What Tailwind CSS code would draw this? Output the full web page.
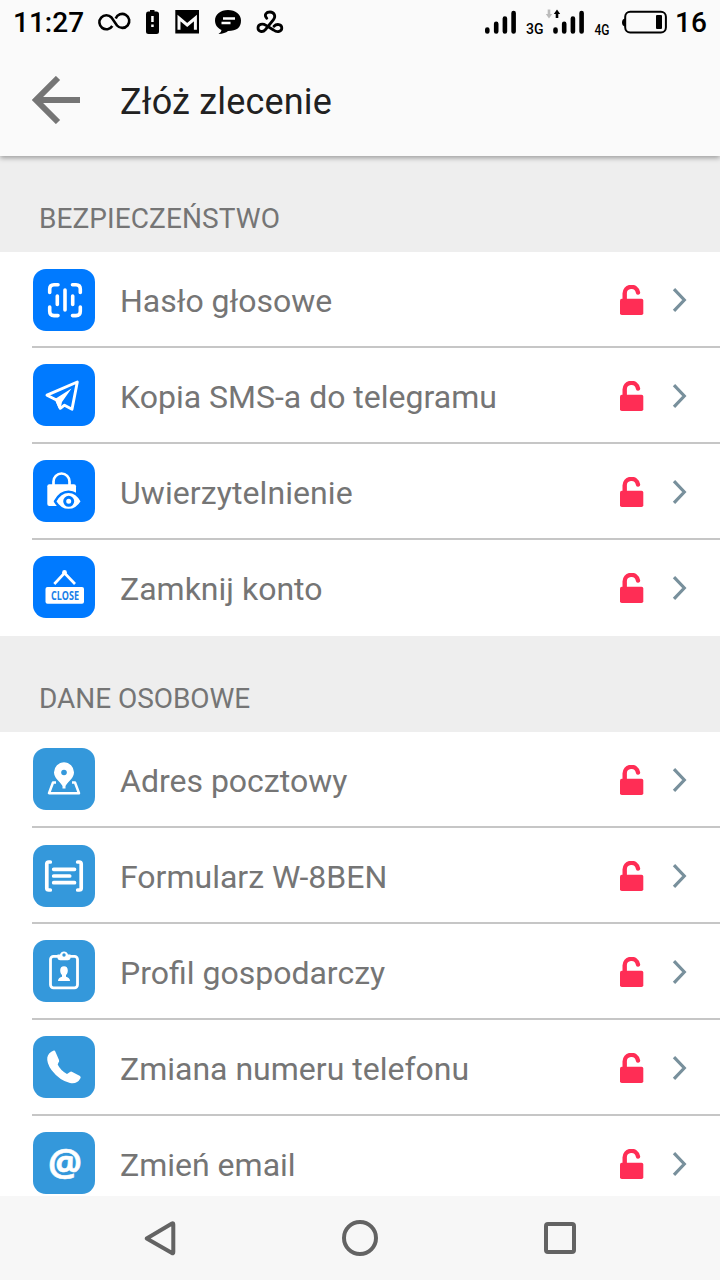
<!DOCTYPE html>
<html lang="pl">
<head>
<meta charset="utf-8">
<title>Złóż zlecenie</title>
<script src="https://cdn.jsdelivr.net/npm/@tailwindcss/browser@4"></script>
</head>
<body class="h-[1280px] w-[720px] overflow-hidden bg-white font-['Roboto',sans-serif]">
<svg class="hidden">
  <symbol id="lock" viewBox="0 0 24 30">
    <rect y="13.7" width="23.3" height="16.3" rx="1.8" fill="#ff2d55"/>
    <path d="M4.700 15V9a6.700 6.700 0 0 1 13.300-1.500" fill="none" stroke="#ff2d55" stroke-width="4.400" stroke-linecap="round"/>
  </symbol>
  <symbol id="chevron" viewBox="0 0 16 26">
    <path d="M2 2.200 12.300 13 2 23.800" fill="none" stroke="#78909c" stroke-width="3.200"/>
  </symbol>
</svg>
<div class="flex h-full flex-col">
  <header class="relative z-10 h-[156px] shrink-0 bg-[#fafafa] shadow-[0_2px_5px_rgba(0,0,0,0.35)]">
    <div class="flex h-12 items-center text-[28px] font-medium text-black">
      <span class="h-12 w-[96px] shrink-0 pl-[13px] leading-[46px]">11:27</span>
      <svg class="h-12 w-[192px] shrink-0" viewBox="96 0 192 48">
        <path d="M112.300 26A7 7 0 1 1 111.500 17.500L117 25.500A7 7 0 1 0 115.700 18.500" fill="none" stroke="#000" stroke-width="2.600"/>
        <path d="M148 11.500h2v-1.500h4.500v1.500h2q2.500 0 2.500 2.500v17.500q0 2.500-2.500 2.500h-8q-2.500 0-2.500-2.500V14q0-2.500 2-2.500z"/>
        <path d="M151.200 16h2.500v6h-2.500zM151.200 24.500h2.500v2.500h-2.500z" fill="#fff"/>
        <rect x="175.300" y="10" width="23.700" height="23.500"/>
        <path d="M179 29.700V18L187.200 25 195.400 18V29.700" fill="none" stroke="#fafafa" stroke-width="3"/>
        <path d="M228 10C220.500 10 215 14.600 215 20.500 215 25 217.500 28 221.500 30Q221.500 32.500 218.500 34 225 33.500 228 31 241 31 241 20.500C241 14.600 235.500 10 228 10z"/>
        <path d="M223 18.500h12M221.500 23h9" stroke="#fff" stroke-width="2.300"/>
        <path d="M266.800 18.300C263.500 14.500 266.500 12 270 12 274.500 12 276 16.500 273.500 19.700L265.500 29.500C262.500 33 258 31.500 258 28 258 24 262.500 23 266 25.300L273.500 30C277.500 33 281.800 31.500 281.800 28 281.800 24 276.500 23.500 274 26.300" fill="none" stroke="#000" stroke-width="2.800" stroke-linecap="round"/>
      </svg>
      <svg class="ml-auto h-12 w-[200px] shrink-0" viewBox="472 0 200 48">
        <g fill="none" stroke="#000" stroke-width="4.600" stroke-linecap="round">
          <path d="M487.300 29.500v2M496.200 23.700v7.800M504.900 18.500v13M513.600 13v18.500"/>
          <path d="M555.500 29.500v2M564.200 23.700v7.800M572.900 18.500v13M581.600 13v18.500"/>
        </g>
        <text x="526" y="33.700" class="font-['Roboto',sans-serif] text-[15px] font-medium" textLength="17.500" lengthAdjust="spacingAndGlyphs">3G</text>
        <text x="594.500" y="35" class="font-['Roboto',sans-serif] text-[15px] font-medium" textLength="15" lengthAdjust="spacingAndGlyphs">4G</text>
        <path d="M547.700 9.500h2.600v4.500h1.900l-3.200 4.500-3.200-4.500h1.900z" fill="#bbb"/>
        <path d="M555.700 18h2.600v-4h1.900l-3.200-4.500-3.200 4.500h1.900z"/>
        <rect x="625.200" y="11.800" width="40.700" height="20.700" rx="5" fill="none" stroke="#000" stroke-width="2"/>
        <path d="M625 18.500q-3 .5-3 4t3 4z"/>
        <rect x="656" y="15" width="6" height="14" rx="1"/>
      </svg>
      <span class="h-12 w-12 shrink-0 pl-[3px] leading-[46px]">16</span>
    </div>
    <div class="flex h-[108px] items-center pl-8">
      <svg class="mb-1 h-12 w-12" viewBox="0 0 48 48" fill="none" stroke="#757575" stroke-width="6"><path d="M48 24H5M26 2 4 24 26 46"/></svg>
      <h1 class="ml-10 text-[36px] leading-[42px] tracking-[0.18px] text-[#212121]">Złóż zlecenie</h1>
    </div>
  </header>

  <main class="min-h-0 flex-1 overflow-hidden text-[#757575]">
    <h2 class="flex h-24 items-end bg-[#eeeeee] pb-[17px] pl-[39px] text-[28px] leading-[33px] tracking-[0.08px]">BEZPIECZEŃSTWO</h2>
    <ul class="text-[32px] leading-[38px]">
      <li class="ml-8 flex h-24 items-center border-b-2 border-[#c6c6c6] pt-0.5">
        <svg class="ml-px size-[62px] rounded-[13px] bg-[#007aff]" viewBox="0 0 62 62" fill="none" stroke="#fff" stroke-width="3.600" stroke-linecap="round">
          <path d="M25 15.700H21q-4.300 0-4.300 4.300v3.500M39.500 15.700h3.500q4.300 0 4.300 4.300v3.500M16.700 38v4.300q0 4.300 4.300 4.300h4M47.300 38v4.300q0 4.300-4.300 4.300h-3.500M24.300 27v8.500M32 21v20M39.700 27v8.500"/>
        </svg>
        <span class="ml-[25px] flex-1 pt-0.5">Hasło głosowe</span>
        <svg class="h-[30px] w-6"><use href="#lock"/></svg><svg class="mr-8 ml-[28px] h-[26px] w-4"><use href="#chevron"/></svg>
      </li>
      <li class="ml-8 flex h-24 items-center border-b-2 border-[#c6c6c6] pt-0.5">
        <svg class="relative -top-px ml-px size-[62px] rounded-[13px] bg-[#007aff]" viewBox="0 0 62 62">
          <path d="M14 31.200 44.300 18 39 45.200 31.500 41.200 27.300 44.300 23.500 36z" fill="none" stroke="#fff" stroke-width="2.900" stroke-linejoin="round"/>
          <path d="M22 35 38.500 24.500 29 38 27.500 45 25.500 44z" fill="#fff"/>
        </svg>
        <span class="ml-[25px] flex-1 pt-0.5">Kopia SMS-a do telegramu</span>
        <svg class="h-[30px] w-6"><use href="#lock"/></svg><svg class="mr-8 ml-[28px] h-[26px] w-4"><use href="#chevron"/></svg>
      </li>
      <li class="ml-8 flex h-24 items-center border-b-2 border-[#c6c6c6] pt-0.5">
        <svg class="relative -top-px ml-px size-[62px] rounded-[13px] bg-[#007aff]" viewBox="0 0 62 62">
          <path d="M20.500 26v-4.500a8 8 0 0 1 16 0V26" fill="none" stroke="#fff" stroke-width="2.700"/>
          <rect x="14.300" y="24.300" width="28.700" height="21.700" rx="2" fill="#fff"/>
          <path d="M22 41.300C29 28.500 42 28.500 49 41.300 42 53 29 53 22 41.300z" fill="#fff" stroke="#007aff" stroke-width="2.500" stroke-linejoin="round"/>
          <circle cx="35.700" cy="41.300" r="4" fill="#fff" stroke="#007aff" stroke-width="3"/>
        </svg>
        <span class="ml-[25px] flex-1 pt-0.5 tracking-[0.08px]">Uwierzytelnienie</span>
        <svg class="h-[30px] w-6"><use href="#lock"/></svg><svg class="mr-8 ml-[28px] h-[26px] w-4"><use href="#chevron"/></svg>
      </li>
      <li class="ml-8 flex h-24 items-center">
        <svg class="relative -top-px ml-px size-[62px] rounded-[13px] bg-[#007aff]" viewBox="0 0 62 62">
          <path d="M21.300 28 31.500 17 42 28" fill="none" stroke="#fff" stroke-width="2.700"/>
          <circle cx="31.500" cy="16.500" r="2.400" fill="#fff"/>
          <rect x="12.500" y="31" width="38.500" height="16.700" rx="2" fill="#fff"/>
          <text x="18" y="43.500" class="fill-[#1a80e8] font-['Open_Sans',sans-serif] text-[12px] font-bold" textLength="28" lengthAdjust="spacingAndGlyphs">CLOSE</text>
        </svg>
        <span class="ml-[25px] flex-1 pt-0.5">Zamknij konto</span>
        <svg class="h-[30px] w-6"><use href="#lock"/></svg><svg class="mr-8 ml-[28px] h-[26px] w-4"><use href="#chevron"/></svg>
      </li>
    </ul>
    <h2 class="flex h-24 items-end bg-[#eeeeee] pb-[17px] pl-[39px] text-[28px] leading-[33px] tracking-[-0.05px]">DANE OSOBOWE</h2>
    <ul class="text-[32px] leading-[38px]">
      <li class="ml-8 flex h-24 items-center border-b-2 border-[#c6c6c6] pt-0.5">
        <svg class="relative -top-px ml-px size-[62px] rounded-[13px] bg-[#3498db]" viewBox="0 0 62 62">
          <path d="M23 34.500h-3L16 45.200h30L42 34.500h-3" fill="none" stroke="#fff" stroke-width="2.500" stroke-linejoin="round"/>
          <path d="M31 14.300a10 10 0 0 1 10 10c0 6-5 8-8.500 13.700V40.500h-3V38C26 32.300 21 30.300 21 24.300a10 10 0 0 1 10-10z" fill="#fff"/>
          <circle cx="31" cy="24.500" r="2.800" fill="#3498db"/>
        </svg>
        <span class="ml-[25px] flex-1 pt-0.5">Adres pocztowy</span>
        <svg class="h-[30px] w-6"><use href="#lock"/></svg><svg class="mr-8 ml-[28px] h-[26px] w-4"><use href="#chevron"/></svg>
      </li>
      <li class="ml-8 flex h-24 items-center border-b-2 border-[#c6c6c6] pt-0.5">
        <svg class="ml-px size-[62px] rounded-[13px] bg-[#3498db]" viewBox="0 0 62 62" fill="none" stroke="#fff" stroke-width="3.700" stroke-linecap="round">
          <path d="M17.300 17h-1.500q-2 0-2 2v24q0 2 2 2h1.500M44.700 17h1.500q2 0 2 2v24q0 2-2 2h-1.500M20.700 24.300h20.800M20.700 31h16M20.700 37.700h20.800"/>
        </svg>
        <span class="ml-[25px] flex-1 pt-0.5">Formularz W-8BEN</span>
        <svg class="h-[30px] w-6"><use href="#lock"/></svg><svg class="mr-8 ml-[28px] h-[26px] w-4"><use href="#chevron"/></svg>
      </li>
      <li class="ml-8 flex h-24 items-center border-b-2 border-[#c6c6c6] pt-0.5">
        <svg class="relative -top-px ml-px size-[62px] rounded-[13px] bg-[#3498db]" viewBox="0 0 62 62">
          <rect x="17.500" y="16.300" width="27" height="31.500" rx="3" fill="none" stroke="#fff" stroke-width="2.800"/>
          <path d="M24.500 14.500h2.500a4.200 4.200 0 0 1 8 0h2.500v3a2.800 2.800 0 0 1-2.800 2.800h-7.400a2.800 2.800 0 0 1-2.800-2.800z" fill="#fff"/>
          <circle cx="31" cy="15" r="1.700" fill="#3498db"/>
          <path d="M31 26.200c2.500 0 3.800 1.600 3.800 4.200 0 2-.8 3.600-1.800 4.600v1.700c1.800.7 4 1.500 4 4.300H25c0-2.800 2.200-3.600 4-4.300V35c-1-1-1.800-2.600-1.800-4.600 0-2.600 1.300-4.200 3.800-4.200z" fill="#fff"/>
        </svg>
        <span class="ml-[25px] flex-1 pt-0.5">Profil gospodarczy</span>
        <svg class="h-[30px] w-6"><use href="#lock"/></svg><svg class="mr-8 ml-[28px] h-[26px] w-4"><use href="#chevron"/></svg>
      </li>
      <li class="ml-8 flex h-24 items-center border-b-2 border-[#c6c6c6] pt-0.5">
        <svg class="relative -top-px ml-px size-[62px] rounded-[13px] bg-[#3498db]" viewBox="0 0 62 62">
          <path d="M20.800 14.500Q21.800 14 22.300 15.500L26 24Q26.500 25.500 25.500 26.500L24.700 28.500Q27.500 34.500 34 38L37 36Q38 35.200 39.300 36L47 40Q48.300 41 47.300 42.500 44 48.500 37 47 26.500 44.500 18.500 34 13.500 27 14.300 21.500 15.300 16.500 20.800 14.500z" fill="#fff"/>
        </svg>
        <span class="ml-[25px] flex-1 pt-0.5">Zmiana numeru telefonu</span>
        <svg class="h-[30px] w-6"><use href="#lock"/></svg><svg class="mr-8 ml-[28px] h-[26px] w-4"><use href="#chevron"/></svg>
      </li>
      <li class="ml-8 flex h-24 items-center border-b-2 border-[#c6c6c6] pt-0.5">
        <svg class="relative -top-px ml-px size-[62px] rounded-[13px] bg-[#3498db]" viewBox="0 0 62 62">
          <text x="15" y="43.500" class="fill-white stroke-white stroke-[0.5px] font-['Open_Sans',sans-serif] text-[37px] font-bold" textLength="34" lengthAdjust="spacingAndGlyphs">@</text>
        </svg>
        <span class="ml-[25px] flex-1 pt-0.5">Zmień email</span>
        <svg class="h-[30px] w-6"><use href="#lock"/></svg><svg class="mr-8 ml-[28px] h-[26px] w-4"><use href="#chevron"/></svg>
      </li>
    </ul>
  </main>

  <nav class="flex h-[84px] shrink-0 items-center justify-between bg-[#f7f7f7] px-[140px]">
    <svg class="size-10" viewBox="0 0 40 40" fill="none" stroke="#636363" stroke-width="4" stroke-linejoin="round"><path d="M6.700 20.500 32 5.500Q33.300 4.800 33.300 6.500V34Q33.300 35.800 32 35z"/></svg>
    <svg class="size-10" viewBox="0 0 40 40" fill="none" stroke="#636363" stroke-width="4"><circle cx="20" cy="20" r="16"/></svg>
    <svg class="size-10" viewBox="0 0 40 40" fill="none" stroke="#636363" stroke-width="4"><rect x="6" y="6" width="28" height="28" rx="2"/></svg>
  </nav>
</div>
</body>
</html>
